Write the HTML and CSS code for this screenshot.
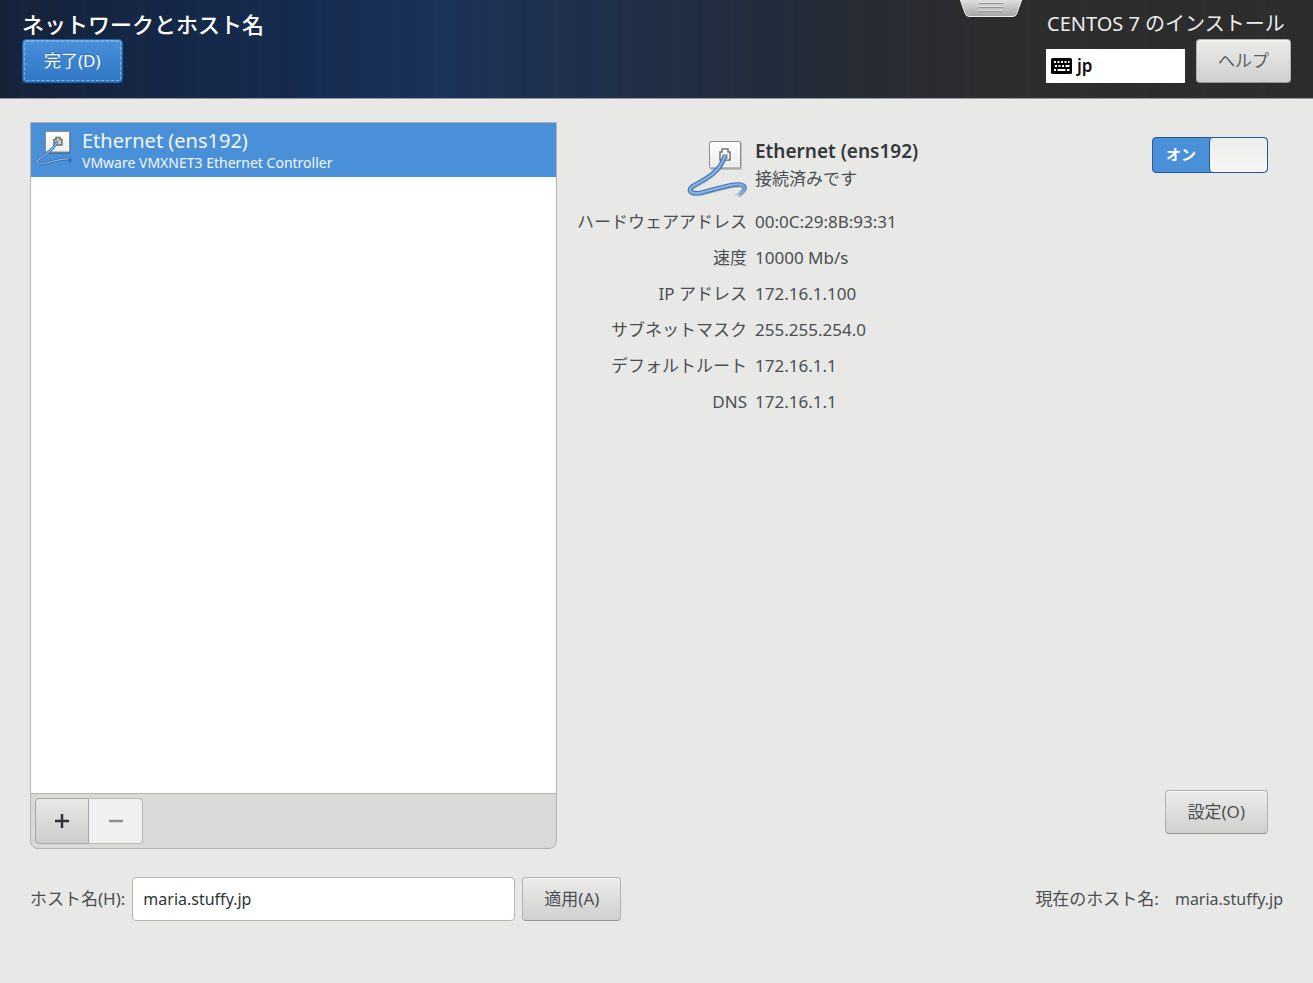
FILE: index.html
```html
<!DOCTYPE html>
<html lang="ja">
<head>
<meta charset="utf-8">
<meta name="viewport" content="width=device-width, initial-scale=1">
<title>ネットワークとホスト名</title>
<link rel="stylesheet" href="styles.css">
</head>
<body>
<svg class="defs" aria-hidden="true">
  <defs>
    <linearGradient id="plate" x1="0" y1="0" x2="0" y2="1">
      <stop offset="0" stop-color="#ffffff"/>
      <stop offset="1" stop-color="#ececea"/>
    </linearGradient>
    <linearGradient id="tail" gradientUnits="userSpaceOnUse" x1="58" y1="48" x2="49" y2="61">
      <stop offset="0" stop-color="#3f73b4"/>
      <stop offset="1" stop-color="#3f73b4" stop-opacity="0"/>
    </linearGradient>
    <linearGradient id="tailLight" gradientUnits="userSpaceOnUse" x1="58" y1="48" x2="50" y2="60">
      <stop offset="0" stop-color="#86b2e4"/>
      <stop offset="1" stop-color="#86b2e4" stop-opacity="0"/>
    </linearGradient>
    <linearGradient id="handle" x1="0" y1="0" x2="0" y2="1">
      <stop offset="0" stop-color="#e2e2e2"/>
      <stop offset="1" stop-color="#a5a5a5"/>
    </linearGradient>
  </defs>
</svg>

<header class="header">
  <div class="header-left">
    <h1 class="title">ネットワークとホスト名</h1>
    <button class="button button-primary" type="button">完了(D)</button>
  </div>
  <button class="console-handle" type="button" aria-label="メニュー">
    <svg width="62" height="18" viewBox="0 0 62 18" aria-hidden="true">
      <path d="M0 -1L5 13Q6 16.500 9 16.500H53Q56 16.500 57 13L62 -1Z" fill="url(#handle)" stroke="#ededed"/>
      <path d="M19 3.500H43M19 7.500H43M19 11.500H43" stroke="#929292"/>
      <path d="M19 2.500H43M19 6.500H43M19 10.500H43" stroke="#e4e4e4"/>
    </svg>
  </button>
  <div class="header-right">
    <div class="product">CENTOS 7 のインストール</div>
    <div class="header-tools">
      <button class="layout" type="button">
        <svg width="22" height="16" viewBox="0 0 22 16" aria-hidden="true">
          <rect x="0" y="0" width="21" height="16" rx="1.500" fill="#000"/>
          <path d="M3 4H5M6.500 4H8.500M10 4H12M13.500 4H15.500M17 4H18.500M4 8H6M7.500 8H9.500M11 8H13M14.500 8H18.500M3 12H5M6.500 12H14.500M16 12H18.500" stroke="#fff" stroke-width="2"/>
        </svg>
        <span>jp</span>
      </button>
      <button class="button" type="button">ヘルプ</button>
    </div>
  </div>
</header>

<main class="main">
  <section class="devices">
    <ul class="device-list">
      <li>
        <button class="device" type="button" aria-pressed="true">
          <svg class="device-icon" viewBox="0 0 40 40" aria-hidden="true">
            <rect x="11.500" y="3" width="24" height="21" fill="#000" opacity=".2"/>
            <rect x="10.500" y="1.500" width="24" height="20.500" rx="1" fill="url(#plate)" stroke="#8b8d89"/>
            <path d="M19 15V9.500h2V7.500h4v2h2V15z" fill="#d2d3d0" stroke="#70736e" stroke-width="1.500"/>
            <path d="M22.500 11C19 21 8 25 2.500 31C0 34 4 34.500 9 33.500C18 31.500 28 28 34 29C36 29.500 35.500 30.500 34 32" fill="none" stroke="#3868a6" stroke-width="2.600"/>
            <path d="M22.500 11C19 21 8 25 2.500 31C0 34 4 34.500 9 33.500C18 31.500 28 28 34 29" fill="none" stroke="#8fb8e8" stroke-width="1.200"/>
          </svg>
          <span class="device-text">
            <span class="device-name">Ethernet (ens192)</span>
            <span class="device-model">VMware VMXNET3 Ethernet Controller</span>
          </span>
        </button>
      </li>
    </ul>
    <div class="toolbar">
      <button class="tool" type="button" aria-label="追加">
        <svg width="14" height="14" viewBox="0 0 14 14" aria-hidden="true"><path d="M0 7H14M7 0V14" stroke="#2e3436" stroke-width="2.500"/></svg>
      </button>
      <button class="tool" type="button" aria-label="削除" disabled>
        <svg width="14" height="14" viewBox="0 0 14 14" aria-hidden="true"><path d="M0 7H14" stroke="#8d9091" stroke-width="2.500"/></svg>
      </button>
    </div>
  </section>

  <section class="details">
    <div class="summary">
      <svg class="summary-icon" viewBox="-3 1 64 64" aria-hidden="true">
        <rect x="24" y="6" width="32" height="28" rx="1" fill="#000" opacity=".16"/>
        <rect x="23.500" y="5.500" width="31" height="26.500" rx="1.500" fill="url(#plate)" stroke="#8b8d89"/>
        <path d="M34 24V16h2v-3h6v3h2v8z" fill="#fff" stroke="#70736e" stroke-width="1.500"/>
        <path d="M37 24v-6h5v6z" fill="#bfc1bd"/>
        <path d="M39 22C34 38 18 45 8 51C1 56 5 60 15 58L43 51C58 48 65 51 53 60" fill="none" stroke="#000" stroke-opacity=".14" stroke-width="4"/>
        <path d="M39 19C35 36 18 44 7 50C1 54 4 58.500 14 57C27 54 45 47.500 54 48.500" fill="none" stroke="#3f73b4" stroke-width="4.600"/>
        <path d="M53 48.500C62 49 59 56 49 61" fill="none" stroke="url(#tail)" stroke-width="4.600"/>
        <path d="M39 19C35 36 18 44 7 50C1 54 4 58.500 14 57C27 54 45 47.500 54 48.500" fill="none" stroke="#86b2e4" stroke-width="2.400"/>
        <path d="M53 48.500C62 49 59 56 49 61" fill="none" stroke="url(#tailLight)" stroke-width="2.400"/>
      </svg>
      <div class="summary-text">
        <h2 class="summary-name">Ethernet (ens192)</h2>
        <p class="summary-state">接続済みです</p>
      </div>
      <label class="switch">
        <input class="switch-input" type="checkbox" role="switch" checked>
        <span class="switch-on">オン</span>
        <span class="switch-knob"></span>
      </label>
    </div>
    <dl class="facts">
      <dt>ハードウェアアドレス</dt><dd>00:0C:29:8B:93:31</dd>
      <dt>速度</dt><dd>10000 Mb/s</dd>
      <dt>IP アドレス</dt><dd>172.16.1.100</dd>
      <dt>サブネットマスク</dt><dd>255.255.254.0</dd>
      <dt>デフォルトルート</dt><dd>172.16.1.1</dd>
      <dt>DNS</dt><dd>172.16.1.1</dd>
    </dl>
    <button class="button configure" type="button">設定(O)</button>
  </section>
</main>

<footer class="footer">
  <form class="host-form">
    <label for="hostname">ホスト名(H):</label>
    <input class="host-input" id="hostname" type="text" value="maria.stuffy.jp">
    <button class="button" type="button">適用(A)</button>
  </form>
  <div class="current"><span>現在のホスト名:</span><span class="host-value">maria.stuffy.jp</span></div>
</footer>
</body>
</html>
```

FILE: styles.css
```css
* { box-sizing: border-box; }

body {
  margin: 0;
  min-height: 100vh;
  display: flex;
  flex-direction: column;
  background: #e8e8e6;
  color: #4a4f51;
  font: 17px/24px "Noto Sans", "Noto Sans CJK JP", sans-serif;
}

h1, h2, p, ul, dl, dd { margin: 0; padding: 0; }
ul { list-style: none; }
button, input { font: inherit; color: inherit; }
.defs { position: absolute; width: 0; height: 0; }

.button {
  height: 44px;
  padding: 0 21px;
  border: 1px solid #b0b0ad;
  border-bottom-color: #989895;
  border-radius: 4px;
  background: linear-gradient(#ebebea, #d0d0ce);
  box-shadow: inset 0 1px #f7f7f7;
  white-space: nowrap;
}

.header {
  position: relative;
  height: 99px;
  padding: 9px 22px 0;
  display: flex;
  justify-content: space-between;
  border-bottom: 1px solid #9698a0;
  color: #fff;
  background:
    repeating-linear-gradient(90deg, transparent 0 17px, rgba(120, 160, 220, .02) 24px, transparent 29px 43px, rgba(0, 0, 0, .04) 51px, transparent 59px),
    linear-gradient(90deg, #162238 0%, #152746 12%, #162b50 23%, #1b3259 34%, #20304a 45%, #232c3b 60%, #292c32 68%, #2d2d2d 76%);
}
.title { font-size: 22px; line-height: 30px; font-weight: 500; }
.product { padding-left: 1px; font-size: 20px; line-height: 30px; color: #eee; white-space: nowrap; }

.button-primary {
  color: #fff;
  border-color: #1d62ab;
  background: linear-gradient(#4a90d9, #2f76c6);
  box-shadow: inset 0 1px #74ace5;
  outline: 1px dashed #86b5e6;
  outline-offset: -3px;
  text-shadow: 0 -1px #2a65a8;
}
.console-handle {
  position: absolute;
  top: 0;
  left: 75.500%;
  transform: translateX(-50%);
  padding: 0;
  border: 0;
  background: none;
}
.console-handle svg { display: block; }

.header-tools { display: flex; gap: 11px; align-items: flex-start; }
.header-tools .button { color: #5a5f61; }
.layout {
  width: 139px;
  height: 34px;
  margin-top: 10px;
  padding: 0 5px;
  display: flex;
  align-items: center;
  gap: 4px;
  border: 0;
  background: #fff;
  color: #111;
  font-weight: 600;
}

.main {
  flex: 1;
  display: grid;
  grid-template-columns: 527fr 711fr;
  padding: 23px 45px 0 30px;
}
.devices {
  display: flex;
  flex-direction: column;
  border: 1px solid #b4b4b1;
  border-radius: 0 0 8px 8px;
  background: #d9d9d7;
  overflow: hidden;
}
.device-list { flex: 1; background: #fff; }
.device {
  width: 100%;
  height: 54px;
  padding: 0 4px;
  display: flex;
  align-items: center;
  gap: 7px;
  border: 0;
  background: #4a90d9;
  color: #f3f7fc;
  text-align: left;
}
.device-icon { width: 40px; height: 40px; }
.device-name, .device-model { display: block; }
.device-name { font-size: 20px; line-height: 26px; }
.device-model { font-size: 14px; line-height: 18px; }

.toolbar { display: flex; padding: 4px; border-top: 1px solid #b4b4b1; }
.tool {
  width: 54px;
  height: 46px;
  padding: 0;
  display: grid;
  place-items: center;
  border: 1px solid #a6a6a3;
  border-radius: 4px 0 0 4px;
  background: linear-gradient(#e8e8e7, #cdcdcb);
}
.tool:disabled {
  border-color: #b8b8b5;
  border-left: 0;
  border-radius: 0 4px 4px 0;
  background: #f0f0f0;
}

.details { display: flex; flex-direction: column; padding: 15px 0 15px 20px; }
.summary, .facts { display: grid; grid-template-columns: 170px 1fr; column-gap: 8px; }
.summary { grid-template-columns: 170px 1fr auto; }
.summary-icon { width: 64px; height: 64px; justify-self: end; }
.summary-name { font-size: 19px; line-height: 28px; font-weight: 600; color: #33393b; }
.summary-state { line-height: 28px; }

.switch {
  position: relative;
  width: 116px;
  height: 36px;
  display: flex;
  border: 1px solid #245a99;
  border-radius: 4px;
  overflow: hidden;
  background: #4a90d9;
}
.switch-input { position: absolute; inset: 0; width: 100%; height: 100%; margin: 0; opacity: 0; }
.switch-on {
  flex: 1;
  text-align: center;
  font-size: 15px;
  line-height: 32px;
  font-weight: 700;
  color: #fff;
}
.switch-knob {
  width: 58px;
  border-left: 1px solid #245a99;
  border-radius: 4px;
  background: linear-gradient(#ededec, #f6f6f5);
}

.facts { row-gap: 12px; padding-top: 9px; }
.facts dt { text-align: right; white-space: nowrap; }
.configure { margin-top: auto; align-self: flex-end; padding: 0 22px; }

.footer {
  padding: 28px 30px 62px;
  display: flex;
  justify-content: space-between;
  align-items: center;
}
.host-form { display: flex; align-items: center; gap: 7px; }
.host-input {
  width: 383px;
  height: 44px;
  padding: 0 10px;
  border: 1px solid #b4b4b1;
  border-radius: 4px;
  background: #fff;
  color: #2e3436;
  font-size: 16px;
}
.host-value { font-size: 16px; }
.current { display: flex; gap: 16px; }
```
